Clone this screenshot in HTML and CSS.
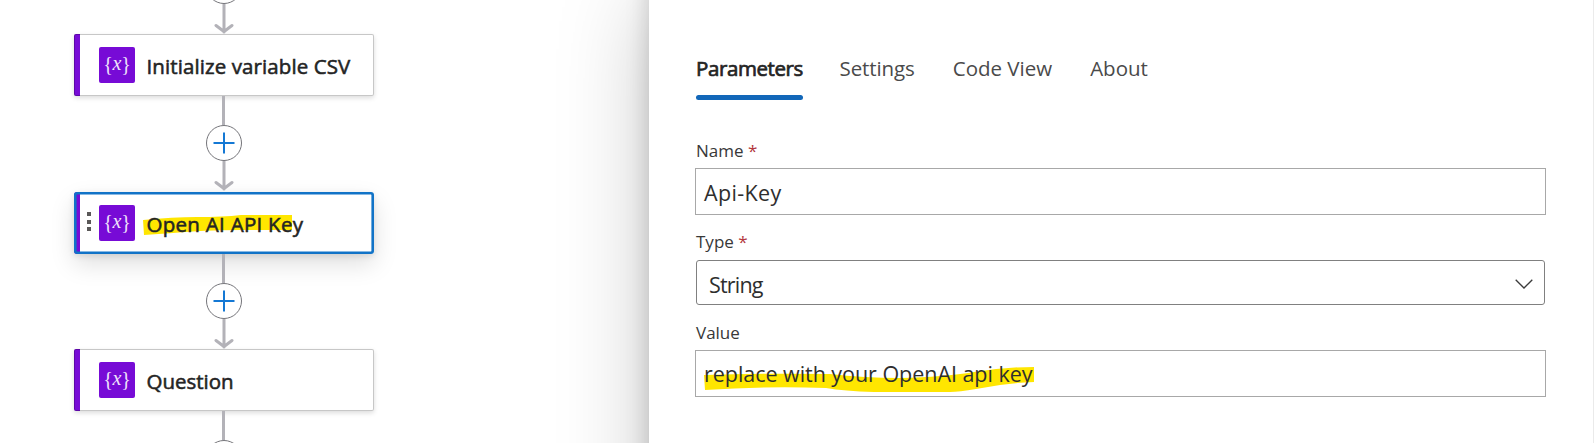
FILE: index.html
```
<!DOCTYPE html>
<html lang="en">
<head>
<meta charset="utf-8">
<title>Workflow designer</title>
<link rel="stylesheet" href="styles.css">
</head>
<body>
<div class="designer">
  <main class="canvas">
    <div class="add"></div>
    <svg class="edge" width="24" height="30" viewBox="0 0 24 30"><path d="M12 0V28M4 21.500L12 27.500L20 21.500"/></svg>
    <div class="card">
      <svg class="icon" viewBox="0 0 36 36"><rect width="36" height="36" rx="2"/><text class="brace" x="9" y="23.500">{</text><text class="var" x="18" y="22.500">x</text><text class="brace" x="27" y="23.500">}</text></svg>
      <span class="title t-init">Initialize variable CSV</span>
    </div>
    <div class="line"></div>
    <div class="add"><svg width="22" height="22" viewBox="0 0 22 22"><path d="M11 .500V21.500M.500 11H21.500"/></svg></div>
    <svg class="edge" width="24" height="30" viewBox="0 0 24 30"><path d="M12 0V28M4 21.500L12 27.500L20 21.500"/></svg>
    <div class="card selected">
      <span class="grip"><i></i><i></i><i></i></span>
      <svg class="icon" viewBox="0 0 36 36"><rect width="36" height="36" rx="2"/><text class="brace" x="9" y="23.500">{</text><text class="var" x="18" y="22.500">x</text><text class="brace" x="27" y="23.500">}</text></svg>
      <span class="title t-key"><svg class="mark mark-key" width="150" height="22" viewBox="0 0 150 22"><path d="M0 6Q30 3 54 3Q80 3 98 1H149V16H98Q60 16 30 19L1 21Z"/></svg><span>Open AI API Key</span></span>
    </div>
    <div class="line"></div>
    <div class="add"><svg width="22" height="22" viewBox="0 0 22 22"><path d="M11 .500V21.500M.500 11H21.500"/></svg></div>
    <svg class="edge" width="24" height="30" viewBox="0 0 24 30"><path d="M12 0V28M4 21.500L12 27.500L20 21.500"/></svg>
    <div class="card">
      <svg class="icon" viewBox="0 0 36 36"><rect width="36" height="36" rx="2"/><text class="brace" x="9" y="23.500">{</text><text class="var" x="18" y="22.500">x</text><text class="brace" x="27" y="23.500">}</text></svg>
      <span class="title t-question">Question</span>
    </div>
    <div class="line"></div>
    <div class="add"></div>
  </main>
  <section class="panel">
    <nav class="tabs">
      <a class="tab active">Parameters</a>
      <a class="tab t-settings">Settings</a>
      <a class="tab t-code">Code View</a>
      <a class="tab t-about">About</a>
    </nav>
    <div class="field">
      <label class="label">Name <b>*</b></label>
      <div class="input"><span class="v-name">Api-Key</span></div>
    </div>
    <div class="field type-field">
      <label class="label">Type <b>*</b></label>
      <div class="select"><span class="v-type">String</span><svg width="18" height="10" viewBox="0 0 18 10"><path d="M.700.700L9 9L17.300.700"/></svg></div>
    </div>
    <div class="field">
      <label class="label">Value</label>
      <div class="input"><svg class="mark mark-value" width="331" height="28" viewBox="0 0 331 28"><path d="M0 9Q60 7 126 8Q160 12 196 12Q240 11 270 6Q300 1 330 1V16Q300 17 272 23Q255 26 246 26H170Q140 25 122 22Q60 20 1 24Z"/></svg><span class="v-value">replace with your OpenAI api key</span></div>
    </div>
  </section>
</div>
</body>
</html>
```
FILE: styles.css
```
* { box-sizing: border-box; }
body {
  margin: 0;
  height: 443px;
  overflow: hidden;
  background: #fff;
  color: #242424;
  font-family: "Open Sans", "Noto Sans", sans-serif;
}
.designer { display: flex; height: 443px; overflow: hidden; }
.canvas {
  flex: 0 0 648.5px;
  display: flex;
  flex-direction: column;
  align-items: center;
  padding-right: 200.5px;
  margin-top: -32px;
}
.canvas > * { flex-shrink: 0; }
.add {
  display: flex;
  align-items: center;
  justify-content: center;
  width: 36px;
  height: 36px;
  border: 1px solid #75757a;
  border-radius: 50%;
  background: #fff;
  z-index: 1;
}
.add svg { margin-right: 1px; }
.add path { stroke: #1478d4; stroke-width: 2; fill: none; }
.edge { display: block; margin: 0 1px .5px 0; z-index: 1; }
.canvas > .edge:nth-child(2) { margin-bottom: 0; }
.edge path {
  stroke: #b3b2b8;
  stroke-width: 3;
  fill: none;
  stroke-linecap: round;
}
.line { width: 3px; height: 29px; margin-right: 1px; background: #b3b2b8; z-index: 1; }
.card {
  position: relative;
  display: flex;
  align-items: center;
  width: 300px;
  height: 62px;
  padding-left: 24.5px;
  background: linear-gradient(90deg, #770bd6 6px, #fff 6px);
  border-radius: 2px;
  box-shadow: inset 0 0 0 1px rgba(0, 0, 0, .22), 0 2px 5px rgba(0, 0, 0, .14);
}
.card.selected {
  box-shadow: inset 0 0 0 2.6px #1173c7, 0 10px 24px rgba(0, 0, 0, .13), 0 2px 6px rgba(0, 0, 0, .1);
  border-radius: 3px;
}
.grip {
  position: absolute;
  left: 13px;
  top: 20.5px;
  display: grid;
  gap: 3.5px;
}
.grip i { width: 4px; height: 4px; background: #5a5858; }
.icon { width: 36px; height: 36px; margin-right: 12px; }
.icon rect { fill: #770bd6; }
.icon text { fill: #f0e2fb; text-anchor: middle; font-family: "Liberation Serif", serif; }
.icon .brace { font-size: 20px; }
.icon .var { font-size: 20px; font-style: italic; }
.title {
  position: relative;
  padding-top: 2px;
  font-size: 20.5px;
  line-height: 28px;
  white-space: nowrap;
  -webkit-text-stroke: .55px #242424;
}
.title span { position: relative; }
.t-init { letter-spacing: .1px; }
.t-key { letter-spacing: .28px; }
.mark { position: absolute; }
.mark path { fill: #ffe600; }
.mark-key { left: -3.5px; top: 6px; }
.mark-value { left: 8px; top: 15px; }

.panel {
  flex: 1;
  height: 640px;
  margin: -40px 2.5px 0 0;
  padding: 84px 46.5px 0 46.5px;
  background: #fff;
  border-right: 1px solid #e2e2e2;
  box-shadow: 0 38px 86px rgba(0, 0, 0, .22), 0 7px 22px rgba(0, 0, 0, .18);
  clip-path: inset(0 0 0 -140px);
  z-index: 2;
}
.tabs { display: flex; margin-left: 1px; height: 56px; }
.tab {
  position: relative;
  height: 56px;
  margin-right: 38px;
  padding-top: 10px;
  font-size: 20.5px;
  line-height: 28px;
  color: #4a4a4a;
  white-space: nowrap;
}
.t-settings { letter-spacing: -.1px; }
.tab.active {
  width: 107px;
  margin-right: 36.5px;
  letter-spacing: -.4px;
  color: #242424;
  -webkit-text-stroke: .7px #242424;
}
.tab.active::after {
  content: "";
  position: absolute;
  left: 0;
  right: 0;
  bottom: 0;
  height: 5px;
  border-radius: 3px;
  background: #1267b9;
}
.field { height: 91px; }
.tabs + .field { margin-top: 37px; }
.label { display: block; height: 31px; padding-left: 1px; font-size: 17px; line-height: 28px; color: #383838; }
.type-field .label { height: 32px; }
.label b { font-weight: 400; color: #b3373c; }
.input, .select {
  position: relative;
  display: flex;
  align-items: center;
  height: 47px;
  padding-left: 8px;
  border: 1px solid #a8a8a8;
  font-size: 21.5px;
  line-height: 30px;
  color: #2e2e2e;
  background: #fff;
}
.input span { position: relative; white-space: nowrap; }
.v-name { padding-top: 2px; letter-spacing: .35px; }
.v-value { letter-spacing: -.04px; }
.v-type { padding-top: 4px; letter-spacing: -.8px; }
.select {
  justify-content: space-between;
  height: 45px;
  margin: 0 1px;
  padding: 0 11.5px 0 12px;
  border-color: #808080;
  border-radius: 3px;
}
.select svg { margin-top: 3px; }
.select path { fill: none; stroke: #3b3b3b; stroke-width: 1.3; }
```
